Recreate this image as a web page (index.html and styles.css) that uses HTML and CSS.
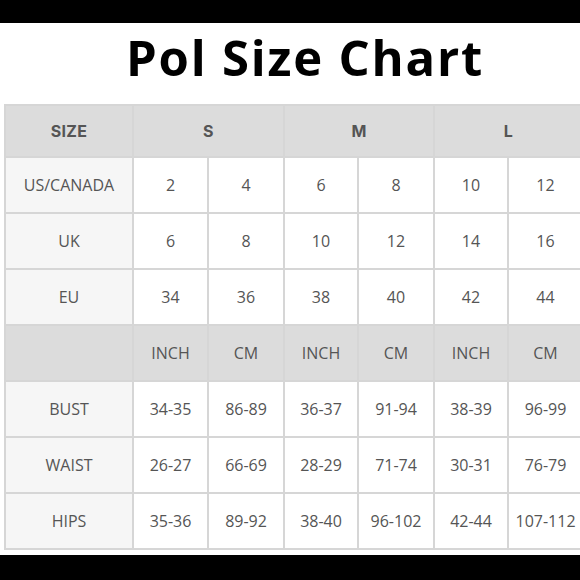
FILE: index.html
```html
<!DOCTYPE html>
<html>
<head>
<meta charset="utf-8">
<link rel="stylesheet" href="styles.css">
</head>
<body>
<div class="bar"></div>
<main class="sheet">
  <h1 class="title">Pol Size Chart</h1>
  <table class="chart">
    <colgroup>
      <col class="c-label"><col class="c-a"><col class="c-b"><col class="c-c"><col class="c-b"><col class="c-c"><col class="c-a">
    </colgroup>
    <tr class="head">
      <th class="label hd">SIZE</th>
      <th colspan="2" class="hd">S</th>
      <th colspan="2" class="hd">M</th>
      <th colspan="2" class="hd">L</th>
    </tr>
    <tr><td class="label">US/CANADA</td><td>2</td><td>4</td><td>6</td><td>8</td><td>10</td><td>12</td></tr>
    <tr><td class="label">UK</td><td>6</td><td>8</td><td>10</td><td>12</td><td>14</td><td>16</td></tr>
    <tr><td class="label">EU</td><td>34</td><td>36</td><td>38</td><td>40</td><td>42</td><td>44</td></tr>
    <tr class="head tall">
      <th class="label"></th>
      <th>INCH</th><th>CM</th><th>INCH</th><th>CM</th><th>INCH</th><th>CM</th>
    </tr>
    <tr><td class="label">BUST</td><td>34-35</td><td>86-89</td><td>36-37</td><td>91-94</td><td>38-39</td><td>96-99</td></tr>
    <tr><td class="label">WAIST</td><td>26-27</td><td>66-69</td><td>28-29</td><td>71-74</td><td>30-31</td><td>76-79</td></tr>
    <tr><td class="label">HIPS</td><td>35-36</td><td>89-92</td><td>38-40</td><td>96-102</td><td>42-44</td><td>107-112</td></tr>
  </table>
</main>
<div class="bar bottom"></div>
</body>
</html>
```
FILE: styles.css
```css
html, body {
  margin: 0;
  padding: 0;
  background: #000;
  width: 580px;
  height: 580px;
  overflow: hidden;
}
.bar {
  height: 23px;
  background: #000;
}
.bar.bottom {
  height: 25px;
}
.sheet {
  background: #fff;
  height: 532px;
  overflow: hidden;
}
.title {
  margin: 0;
  height: 81px;
  box-sizing: border-box;
  padding-top: 4px;
  padding-left: 30px;
  font-family: "Open Sans", sans-serif;
  font-weight: 700;
  font-size: 49px;
  line-height: 60px;
  text-align: center;
  color: #000;
  letter-spacing: 1.8px;
}
.chart {
  margin-left: 4px;
  width: 580px;
  table-layout: fixed;
  border-collapse: collapse;
  font-family: "Open Sans", sans-serif;
  font-size: 16px;
  color: #555;
}
.c-label { width: 128px; }
.c-a { width: 75px; }
.c-b { width: 76px; }
.c-c { width: 74px; }
.chart td, .chart th {
  border: 2px solid #d6d6d6;
  height: 54px;
  padding: 0;
  text-align: center;
  vertical-align: middle;
  background: #fff;
  font-weight: 400;
}
.chart tr.head th {
  background: #dcdcdc;
  height: 50px;
}
.chart tr.tall th {
  height: 54px;
}
.chart .hd {
  font-family: "Inter", "DejaVu Sans", sans-serif;
  font-weight: 700;
  font-size: 16px;
  letter-spacing: 0.3px;
  color: #555;
}
.chart td.label {
  background: #f6f6f6;
}
```
